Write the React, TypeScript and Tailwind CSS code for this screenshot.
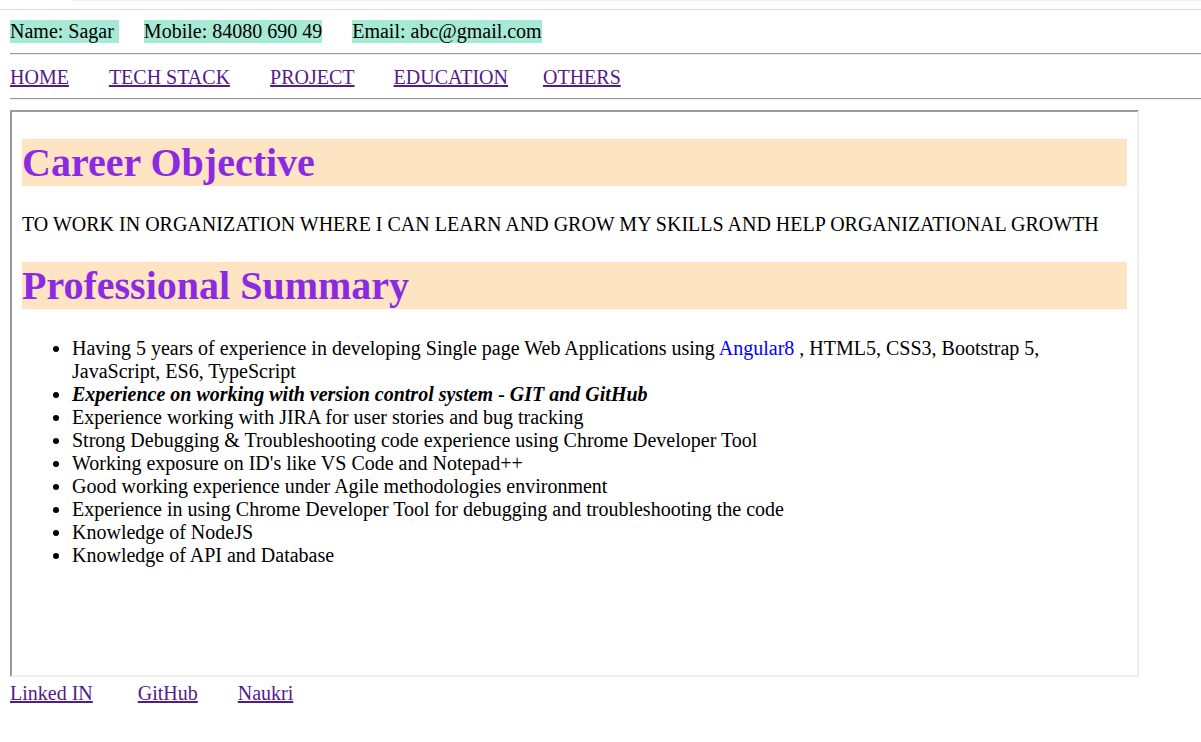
import React from 'react';

const summary: { text: React.ReactNode; strong?: boolean }[] = [
  {
    text: (
      <>
        Having 5 years of experience in developing Single page Web Applications using{' '}
        <span className="text-[#0000ff]">Angular8</span> , HTML5, CSS3, Bootstrap 5, JavaScript, ES6, TypeScript
      </>
    ),
  },
  { text: 'Experience on working with version control system - GIT and GitHub', strong: true },
  { text: 'Experience working with JIRA for user stories and bug tracking' },
  { text: 'Strong Debugging & Troubleshooting code experience using Chrome Developer Tool' },
  { text: "Working exposure on ID's like VS Code and Notepad++" },
  { text: 'Good working experience under Agile methodologies environment' },
  { text: 'Experience in using Chrome Developer Tool for debugging and troubleshooting the code' },
  { text: 'Knowledge of NodeJS' },
  { text: 'Knowledge of API and Database' },
];

const navLinks = [
  { label: 'HOME', cls: 'mr-[40px]' },
  { label: 'TECH STACK', cls: 'mr-[40px]' },
  { label: 'PROJECT', cls: 'mr-[39px]' },
  { label: 'EDUCATION', cls: 'mr-[35px]' },
  { label: 'OTHERS', cls: '' },
];

function Rule() {
  return <div className="h-[2px] border-t border-t-[#9a9a9a] border-b border-b-[#eeeeee] mr-[-10px]" />;
}

export default function App() {
  return (
    <div className="min-h-[742px] bg-white text-black font-['Liberation_Serif',serif] text-[20px] leading-[23px]">
      {/* top strip */}
      <div className="h-[9px] relative">
        <div className="absolute left-[72px] right-0 top-0 h-px bg-[#eef0f8]" />
      </div>
      <div className="h-px bg-[#dcdcdc]" />

      <div className="px-[10px] pt-[10px]">
        {/* Contact */}
        <div className="h-[23px] flex items-center">
          <span className="bg-[#a6e9d4] pr-[5px]">Name: Sagar</span>
          <span className="bg-[#a6e9d4] ml-[25px]">Mobile: 84080 690 49</span>
          <span className="bg-[#a6e9d4] ml-[30px]">Email: abc@gmail.com</span>
        </div>

        <div className="mt-[10px]">
          <Rule />
        </div>

        {/* Nav */}
        <nav className="mt-[11px] h-[23px] flex">
          {navLinks.map(l => (
            <a key={l.label} href="#" className={`text-[#551a8b] underline ${l.cls}`}>
              {l.label}
            </a>
          ))}
        </nav>

        <div className="mt-[9px]">
          <Rule />
        </div>

        {/* Framed content */}
        <div className="mt-[10px] w-[1129px] h-[567px] border-2 border-t-[#9a9a9a] border-l-[#9a9a9a] border-r-[#eeeeee] border-b-[#eeeeee] overflow-hidden">
          <div className="px-[10px] pt-[27px]">
            <h1 className="bg-[#ffe4c4] text-[#8a2be2] font-bold text-[40px] leading-[47px]">Career Objective</h1>
            <p className="mt-[27px]">
              TO WORK IN ORGANIZATION WHERE I CAN LEARN AND GROW MY SKILLS AND HELP ORGANIZATIONAL GROWTH
            </p>
            <h1 className="mt-[26px] bg-[#ffe4c4] text-[#8a2be2] font-bold text-[40px] leading-[47px]">
              Professional Summary
            </h1>
            <ul className="mt-[28px] pl-[50px] list-disc">
              {summary.map((item, i) => (
                <li key={i} className={item.strong ? 'font-bold italic' : ''}>
                  {item.text}
                </li>
              ))}
            </ul>
          </div>
        </div>

        {/* Footer links */}
        <div className="mt-[5px] h-[23px] flex">
          <a href="#" className="text-[#551a8b] underline mr-[45px]">Linked IN</a>
          <a href="#" className="text-[#551a8b] underline mr-[40px]">GitHub</a>
          <a href="#" className="text-[#551a8b] underline">Naukri</a>
        </div>
      </div>
    </div>
  );
}
